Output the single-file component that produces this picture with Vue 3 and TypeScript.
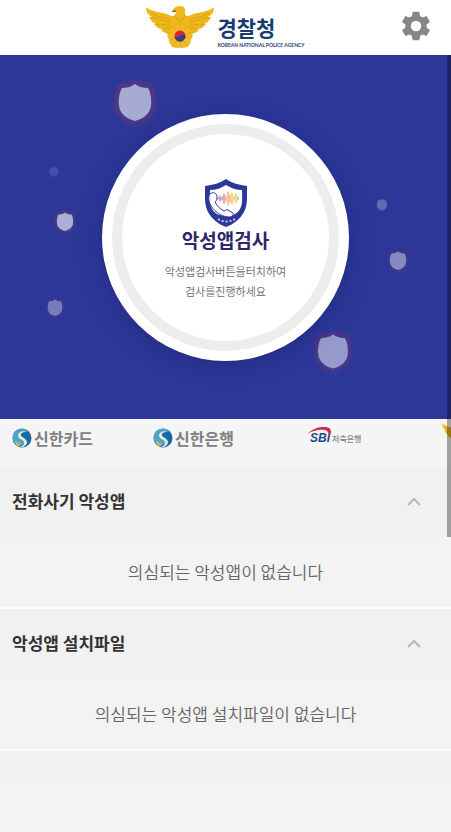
<script setup lang="ts">
import { ref } from 'vue'

interface Section {
  title: string
  message: string
  open: boolean
}

interface Shield {
  x: number
  y: number
  scale: number
  alpha: number
  halo: number
}

const sections = ref<Section[]>([
  { title: '전화사기 악성앱', message: '의심되는 악성앱이 없습니다', open: true },
  { title: '악성앱 설치파일', message: '의심되는 악성앱 설치파일이 없습니다', open: true },
])

const shields: Shield[] = [
  { x: 135, y: 48, scale: 1, alpha: 0.58, halo: 0.6 },
  { x: 333, y: 297, scale: 0.92, alpha: 0.5, halo: 0.5 },
  { x: 65, y: 167, scale: 0.5, alpha: 0.6, halo: 0.5 },
  { x: 398, y: 206, scale: 0.5, alpha: 0.42, halo: 0.4 },
  { x: 55, y: 253, scale: 0.45, alpha: 0.35, halo: 0.3 },
  { x: 382, y: 150, scale: 0.31, alpha: 0.25, halo: 0.1 },
  { x: 54, y: 117, scale: 0.28, alpha: 0.12, halo: 0 },
]

const shieldPath = 'M0-19C-4-16-9-15-13-15C-15-12-17-5-16 3C-15 11-8 16 0 18C8 16 15 11 16 3C17-5 15-12 13-15C9-15 4-16 0-19Z'

const petalAngles = [0, 72, 144, 216, 288]
</script>

<template>
  <div class="app">
    <svg class="defs" aria-hidden="true">
      <symbol id="eagle" viewBox="0 0 68 43">
        <path fill="#efb71c" d="M0 1C6 6 14 6 21 8C25 10 27 11 29 9L30 6L26 6C27 2 30 0 34 0C38 0 40 3 39 6L39 9C41 11 43 10 47 8C54 6 62 6 68 1C68 6 66 9 62 11L65 11C63 15 61 17 58 18L60 18C58 21 55 23 51 23L53 24C50 27 47 28 43 27L34 30L25 27C21 28 18 27 15 24L17 23C13 23 10 21 8 18L10 18C7 17 5 15 3 11L6 11C2 9 0 6 0 1Z" />
        <g transform="translate(34 30)">
          <path v-for="a in petalAngles" :key="a" :transform="`rotate(${a})`" fill="#f3bd20" stroke="#d69d1a" stroke-width="0.5" d="M0 0L-7-8L-5-11L0-13L5-11L7-8Z" />
          <path v-for="a in petalAngles" :key="`v${a}`" :transform="`rotate(${a})`" stroke="#d69d1a" stroke-width="0.6" d="M0-6V-12" />
        </g>
        <path fill="none" stroke="#d69d1a" stroke-width="0.8" d="M4 7C11 11 17 11 24 13M6 11C13 14 18 14 24 16M10 18C15 19 19 18 24 19M17 23L23 22M64 7C57 11 51 11 44 13M62 11C55 14 50 14 44 16M58 18C53 19 49 18 44 19M51 23L45 22M29 9L31 14M39 9L37 14M31 13L34 16L37 13" />
        <path fill="#8a5a12" d="M29 4L25 6L30 6Z" />
        <circle cx="34" cy="30" r="5.500" fill="#dc2331" />
        <path fill="#214a96" d="M28.500 30A5.500 5.500 0 0 0 39.500 30C38 28 36 29 34 30C32 32 30 32 28.500 30Z" />
      </symbol>
      <symbol id="shinhan" viewBox="0 0 20 20">
        <circle cx="10" cy="10" r="9.500" fill="#1769a5" />
        <path fill="#4fa3c9" d="M2 5C5 0 14-1 17 4C13 2 9 3 8 6C6 9 12 11 12 14C12 17 7 19 4 17C0 13 0 8 2 5Z" />
        <path fill="#e6ebdc" d="M15 4C11 2 6 4 6 8C7 12 12 11 12 15C12 17 10 18 8 19L11 19C15 17 16 14 14 12C12 9 8 9 9 6C10 4 13 4 15 4Z" />
        <path fill="#b9b37c" d="M3 13C5 13 6 15 9 15L7 19C4 18 3 16 3 13Z" />
      </symbol>
    </svg>

    <header class="topbar">
      <h1 class="brand">
        <svg class="brand-mark" aria-hidden="true"><use href="#eagle" /></svg>
        <span class="brand-text">
          <span class="brand-name">경찰청</span>
          <span class="brand-sub">KOREAN NATIONAL POLICE AGENCY</span>
        </span>
      </h1>
      <button class="settings" type="button" aria-label="설정">
        <svg viewBox="0 0 24 24" aria-hidden="true">
          <path fill="currentColor" d="M19.430 12.980c.04-.32.07-.64.07-.98s-.03-.66-.07-.98l2.110-1.650c.19-.15.24-.42.12-.64l-2-3.460c-.12-.22-.39-.3-.61-.22l-2.490 1c-.52-.4-1.080-.73-1.690-.98l-.38-2.650C14.460 2.180 14.250 2 14 2h-4c-.25 0-.46.18-.49.42l-.38 2.650c-.61.25-1.170.59-1.690.98l-2.490-1c-.23-.09-.49 0-.61.22l-2 3.460c-.13.22-.07.49.12.64l2.110 1.650c-.04.32-.07.65-.07.98s.03.66.07.98l-2.110 1.650c-.19.15-.24.42-.12.64l2 3.460c.12.22.39.3.61.22l2.490-1c.52.4 1.080.73 1.690.98l.38 2.650c.03.24.24.42.49.42h4c.25 0 .46-.18.49-.42l.38-2.650c.61-.25 1.170-.59 1.690-.98l2.490 1c.23.09.49 0 .61-.22l2-3.460c.12-.22.07-.49-.12-.64l-2.110-1.650zM12 15.700a3.700 3.700 0 1 1 0-7.400 3.700 3.700 0 0 1 0 7.400z" />
        </svg>
      </button>
    </header>

    <main class="content">
      <section class="hero">
        <svg class="hero-art" viewBox="0 0 451 364" aria-hidden="true">
          <g v-for="(s, i) in shields" :key="i" :transform="`translate(${s.x} ${s.y}) scale(${s.scale})`">
            <path :d="shieldPath" fill="#573783" stroke="#573783" stroke-width="12" stroke-linejoin="round" :opacity="s.halo * 0.7" />
            <path :d="shieldPath" fill="#573783" stroke="#573783" stroke-width="7" stroke-linejoin="round" :opacity="s.halo" />
            <path :d="shieldPath" fill="#2c3798" />
            <path :d="shieldPath" fill="#ffffff" :opacity="s.alpha" />
          </g>
        </svg>
        <button class="scan" type="button">
          <span class="scan-face">
            <svg class="scan-icon" viewBox="0 0 42 48" aria-hidden="true">
              <path fill="#2d3799" d="M21 0C27 4 34 6 42 7C42 16 43 25 39 33C35 40 29 45 21 48C13 45 7 40 3 33C-1 25 0 16 0 7C8 6 15 4 21 0Z" />
              <path fill="#fff" d="M21 6C26 9 31 11 37 11C37 19 38 25 35 30C32 35 27 37 21 37C15 37 10 35 7 30C4 25 5 19 5 11C11 11 16 9 21 6Z" />
              <path fill="#fff" stroke="#2d3799" stroke-width="1" d="M7 14C9 13 11 14 12 17L12 20C12 22 10 22 10 23C12 27 15 30 19 32C20 32 21 30 23 31L28 34C29 36 27 38 24 38C14 38 2 27 4 17C4 15 6 14 7 14Z" />
              <g fill="none" stroke-width="1" stroke-linecap="round">
                <path stroke="#7957a5" d="M13 19V20M15 17V22" />
                <path stroke="#d74b68" d="M17 18V21M19 15V24" />
                <path stroke="#ef8b32" d="M21 17V22M23 13V26M25 16V23" />
                <path stroke="#e5b52b" d="M27 14V25M29 17V22M31 15V24" />
                <path stroke="#8aa65b" d="M33 18V21" />
              </g>
              <path fill="none" stroke="#c9cde8" stroke-width="2" stroke-dasharray="2 2" d="M13 40Q21 45 30 40" />
            </svg>
            <strong class="scan-title">악성앱검사</strong>
            <span class="scan-note">악성앱검사버튼을터치하여<br />검사를진행하세요</span>
          </span>
        </button>
      </section>

      <ul class="partners">
        <li class="partner">
          <svg class="partner-mark" aria-hidden="true"><use href="#shinhan" /></svg>
          <span>신한카드</span>
        </li>
        <li class="partner">
          <svg class="partner-mark" aria-hidden="true"><use href="#shinhan" /></svg>
          <span>신한은행</span>
        </li>
        <li class="partner sbi">
          <span class="sbi-logo">SBI
            <svg class="sbi-arc" viewBox="0 0 24 10" aria-hidden="true">
              <path fill="#cf2d40" d="M0 7C6 1 17-2 22 1C25 3 24 7 22 10C22 6 21 4 18 3C12 2 5 4 0 7Z" />
            </svg>
          </span>
          <span class="sbi-name">저축은행</span>
        </li>
        <li class="partner police">
          <svg class="police-mark" role="img" aria-label="경찰청"><use href="#eagle" /></svg>
        </li>
      </ul>

      <section v-for="s in sections" :key="s.title" class="panel">
        <h2 class="panel-heading">
          <button class="panel-toggle" type="button" :aria-expanded="s.open" @click="s.open = !s.open">
            <span>{{ s.title }}</span>
            <svg class="chevron" :class="{ closed: !s.open }" viewBox="0 0 14 8" aria-hidden="true">
              <path d="M1 7L7 1L13 7" fill="none" stroke="currentColor" stroke-width="2" />
            </svg>
          </button>
        </h2>
        <p v-if="s.open" class="panel-body">{{ s.message }}</p>
      </section>
      <div class="strip"></div>
      <div class="scroll-thumb" aria-hidden="true"></div>
    </main>
  </div>
</template>

<style>
body {
  background: #f3f3f3;
}
</style>

<style scoped>
.app {
  min-height: 100vh;
  overflow: hidden;
  background: #f3f3f3;
  color: #333;
  font-family: "Noto Sans CJK KR", sans-serif;
}

.defs {
  position: absolute;
  width: 0;
  height: 0;
}

button {
  padding: 0;
  border: 0;
  background: none;
  color: inherit;
  font: inherit;
  cursor: pointer;
}

.topbar {
  display: grid;
  grid-template-columns: 1fr auto 1fr;
  align-items: center;
  height: 55px;
  padding: 0 18px;
  box-sizing: border-box;
  background: #fff;
}

.brand {
  grid-column: 2;
  display: flex;
  align-items: center;
  gap: 3px;
  margin: 0;
}

.brand-mark {
  width: 68px;
  height: 43px;
}

.brand-text {
  display: flex;
  flex-direction: column;
  gap: 4px;
  padding-top: 8px;
}

.brand-name {
  color: #173a70;
  font-size: 21px;
  font-weight: 700;
  line-height: 22px;
}

.brand-sub {
  color: #173a70;
  font-family: Lato, sans-serif;
  font-size: 5px;
  font-weight: 700;
  line-height: 6px;
  white-space: nowrap;
}

.settings {
  justify-self: end;
  display: flex;
  padding-bottom: 4px;
  color: #868686;
}

.settings svg {
  width: 34px;
  height: 34px;
}

.content {
  position: relative;
}

.hero {
  position: relative;
  display: flex;
  align-items: center;
  justify-content: center;
  height: 364px;
  background: #2c3798;
}

.hero-art {
  position: absolute;
  inset: 0;
  width: 100%;
  height: 100%;
}

.scan {
  position: relative;
  display: flex;
  padding: 10px;
  border-radius: 50%;
  background: #fff;
  box-shadow: 0 4px 24px rgba(15, 20, 80, 0.3);
}

.scan-face {
  display: flex;
  flex-direction: column;
  align-items: center;
  width: 227px;
  height: 227px;
  padding-top: 45px;
  box-sizing: border-box;
  border: 10px solid #ededed;
  border-radius: 50%;
}

.scan-icon {
  width: 42px;
  height: 48px;
}

.scan-title {
  color: #2f2568;
  font-size: 19px;
  font-weight: 700;
  line-height: 26px;
}

.scan-note {
  margin-top: 8px;
  color: #6a6a6a;
  font-size: 11px;
  font-weight: 350;
  line-height: 20px;
}

.partners {
  display: flex;
  height: 48px;
  margin: 0;
  padding: 0 0 0 12px;
  box-sizing: border-box;
  overflow: hidden;
  list-style: none;
  background: #f5f5f5;
}

.partner {
  display: flex;
  flex: 0 0 141px;
  align-items: center;
  gap: 2px;
  height: 38px;
  color: #808080;
  font-size: 16px;
  font-weight: 700;
}

.partner-mark {
  width: 20px;
  height: 20px;
}

.sbi {
  box-sizing: border-box;
  flex-basis: 148px;
  padding-left: 16px;
}

.sbi-logo {
  position: relative;
  color: #174f87;
  font-family: "Liberation Sans", sans-serif;
  font-size: 12px;
  font-style: italic;
  font-weight: 700;
  line-height: 16px;
}

.sbi-arc {
  position: absolute;
  top: -3px;
  left: -3px;
  width: 24px;
  height: 10px;
}

.sbi-name {
  font-size: 8px;
  font-weight: 500;
}

.police-mark {
  flex: none;
  width: 48px;
  height: 30px;
}

.panel {
  border-bottom: 2px solid #fdfdfd;
}

.panel-heading {
  margin: 0;
  font-size: 17px;
  font-weight: 700;
}

.panel-toggle {
  display: flex;
  align-items: center;
  justify-content: space-between;
  width: 100%;
  height: 70px;
  padding: 0 30px 4px 12px;
  background: #f1f1f1;
}

.chevron {
  width: 14px;
  height: 8px;
  margin-top: 4px;
  color: #b8b8b8;
}

.closed {
  transform: rotate(180deg);
}

.panel-body {
  margin: 0;
  color: #666;
  font-size: 17px;
  font-weight: 350;
  line-height: 70px;
  text-align: center;
}

.strip {
  height: 26px;
  background: #f1f1f1;
}

.scroll-thumb {
  position: absolute;
  top: 0;
  right: 0;
  width: 4px;
  height: 482px;
  background: rgba(0, 0, 0, 0.34);
}
</style>
